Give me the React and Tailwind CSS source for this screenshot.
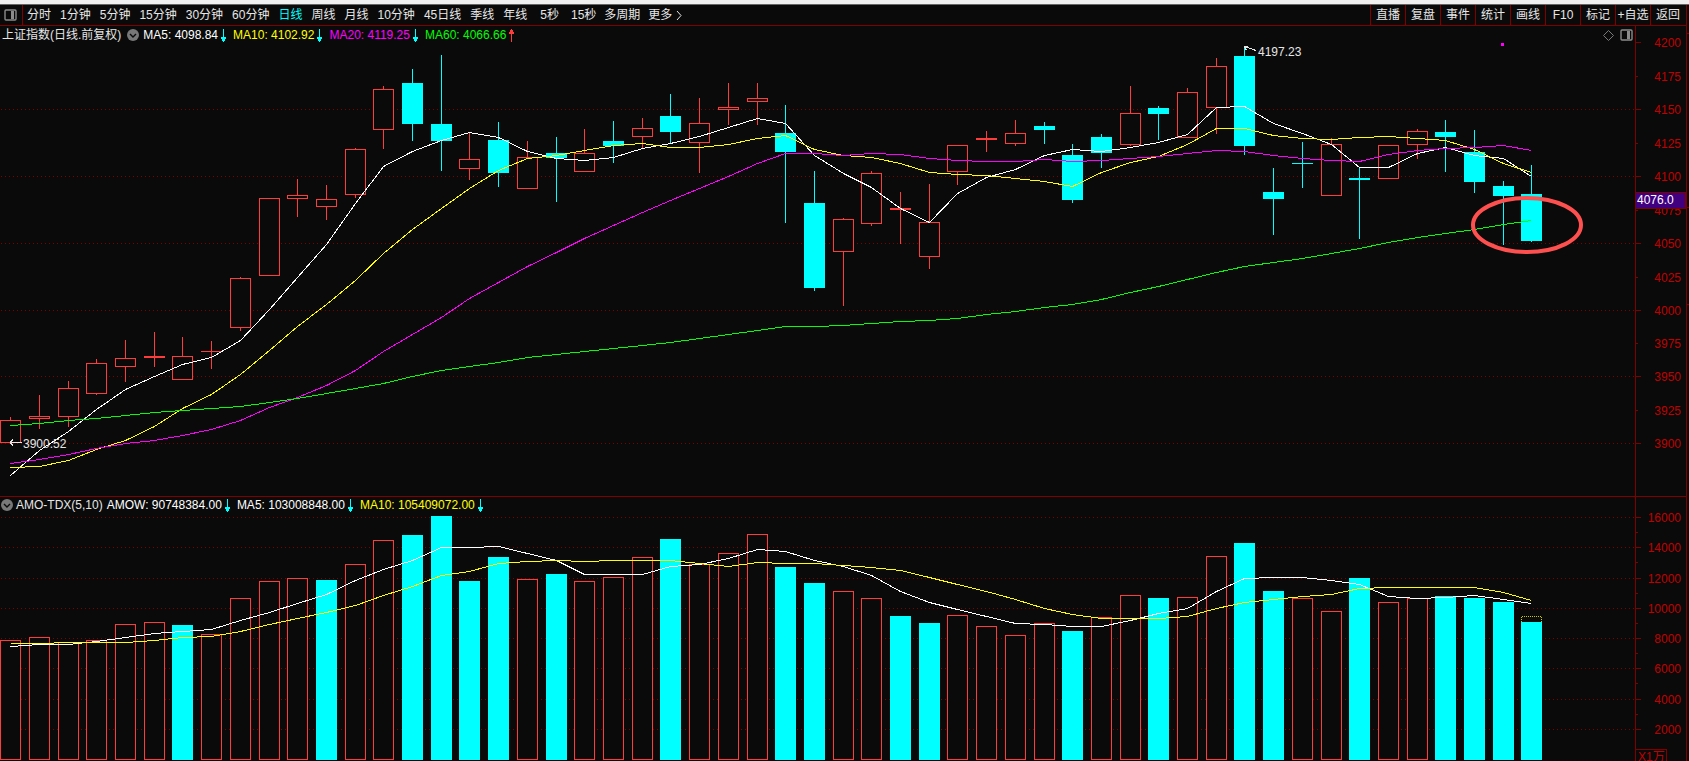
import { useState } from 'react'

const UP = '#ff3c3c'
const DOWN = '#00ffff'
const GRID = '#800000'
const BG = '#0a0a0a'

const PERIODS = ['分时', '1分钟', '5分钟', '15分钟', '30分钟', '60分钟', '日线', '周线', '月线', '10分钟', '45日线', '季线', '年线']
const SECONDS = ['5秒', '15秒']
const ACTIONS = ['直播', '复盘', '事件', '统计', '画线', 'F10', '标记', '+自选', '返回']

// x, high, body top, body bottom, low, rising
const candles = [
  [0, 417, 420, 442, 442, 1], [29, 395, 416, 418, 428, 1], [58, 381, 388, 416, 426, 1],
  [86, 359, 363, 393, 394, 1], [115, 340, 358, 366, 381, 1], [144, 332, 356, 357, 366, 1],
  [172, 337, 356, 379, 379, 1], [201, 341, 351, 351, 368, 1], [230, 277, 278, 327, 330, 1],
  [259, 198, 198, 275, 275, 1], [287, 179, 195, 198, 216, 1], [316, 185, 199, 206, 219, 1],
  [345, 148, 149, 194, 197, 1], [373, 86, 89, 129, 148, 1], [402, 69, 83, 123, 140, 0],
  [431, 55, 124, 140, 170, 0], [459, 133, 159, 168, 179, 1], [488, 122, 140, 172, 186, 0],
  [517, 141, 157, 188, 188, 1], [546, 137, 153, 157, 201, 0], [574, 129, 153, 171, 171, 1],
  [603, 121, 141, 145, 162, 0], [632, 118, 128, 136, 147, 1], [660, 94, 116, 131, 143, 0],
  [689, 98, 123, 142, 172, 1], [718, 83, 107, 109, 124, 1], [747, 83, 98, 101, 124, 1],
  [775, 105, 133, 151, 222, 0], [804, 171, 203, 287, 290, 0], [833, 218, 219, 251, 305, 1],
  [861, 171, 173, 223, 225, 1], [890, 192, 208, 209, 243, 1], [919, 184, 222, 256, 268, 1],
  [947, 145, 145, 171, 184, 1], [976, 131, 138, 139, 151, 1], [1005, 120, 133, 143, 145, 1],
  [1034, 122, 126, 129, 143, 0], [1062, 144, 155, 199, 202, 0], [1091, 134, 137, 152, 167, 0],
  [1120, 86, 113, 144, 145, 1], [1148, 106, 108, 113, 139, 0], [1177, 88, 92, 137, 137, 1],
  [1206, 58, 66, 107, 133, 1], [1234, 46, 56, 145, 154, 0], [1263, 168, 192, 198, 234, 0],
  [1292, 142, 163, 163, 187, 0], [1321, 138, 144, 195, 195, 1], [1349, 168, 178, 179, 238, 0],
  [1378, 145, 145, 178, 178, 1], [1407, 129, 131, 144, 158, 1], [1435, 120, 132, 136, 171, 0],
  [1464, 130, 152, 181, 192, 0], [1493, 181, 186, 195, 244, 0], [1521, 165, 194, 240, 241, 0],
]

// bar top, rising
const amounts = [
  [640, 1], [637, 1], [642, 1], [640, 1], [624, 1], [622, 1], [625, 0], [634, 1], [598, 1],
  [581, 1], [578, 1], [580, 0], [564, 1], [540, 1], [535, 0], [516, 0], [581, 0], [557, 0],
  [579, 1], [574, 0], [581, 1], [577, 1], [557, 1], [539, 0], [564, 1], [553, 1], [534, 1],
  [567, 0], [583, 0], [591, 1], [598, 1], [616, 0], [623, 0], [615, 1], [626, 1], [635, 1],
  [623, 1], [631, 0], [617, 1], [595, 1], [598, 0], [597, 1], [556, 1], [543, 0], [591, 0],
  [598, 1], [611, 1], [578, 0], [602, 1], [598, 1], [596, 0], [598, 0], [602, 0], [622, 0],
]

const priceLines = [
  {
    color: '#ffffff',
    ys: [475, 450, 431, 409, 389, 376, 364, 357, 340, 309, 277, 244, 203, 166, 151, 140, 132, 137, 151, 158, 160, 157, 148, 143, 136, 127, 118, 123, 155, 173, 187, 208, 222, 193, 177, 169, 155, 149, 151, 147, 142, 134, 107, 106, 123, 133, 144, 167, 167, 153, 147, 155, 158, 176],
  },
  {
    color: '#ffff00',
    ys: [467, 466, 460, 449, 440, 426, 408, 394, 374, 350, 326, 304, 280, 253, 229, 208, 188, 170, 158, 155, 150, 145, 143, 147, 147, 144, 138, 135, 149, 155, 157, 163, 172, 174, 175, 178, 181, 186, 172, 162, 156, 144, 128, 128, 135, 138, 139, 137, 136, 138, 140, 149, 163, 172],
  },
  {
    color: '#ff00ff',
    ys: [463, 459, 454, 448, 443, 440, 435, 429, 420, 407, 397, 385, 370, 351, 334, 317, 298, 282, 266, 252, 238, 225, 212, 200, 188, 176, 163, 153, 153, 155, 153, 154, 158, 160, 161, 161, 159, 161, 160, 158, 156, 153, 150, 151, 155, 158, 160, 161, 154, 150, 148, 147, 145, 150],
  },
  {
    color: '#00ff00',
    ys: [425, 423, 420, 418, 415, 412, 410, 408, 406, 402, 398, 393, 388, 383, 376, 370, 366, 362, 357, 354, 351, 348, 345, 342, 338, 334, 330, 326, 326, 325, 323, 321, 320, 318, 314, 311, 307, 304, 299, 292, 286, 279, 272, 266, 262, 258, 253, 248, 242, 237, 233, 229, 224, 220],
  },
]

const amountLines = [
  {
    color: '#ffffff',
    ys: [646, 644, 644, 641, 637, 633, 631, 629, 620, 612, 603, 594, 580, 569, 560, 547, 547, 546, 553, 560, 574, 574, 574, 566, 564, 558, 549, 551, 560, 566, 575, 591, 602, 609, 616, 623, 624, 626, 626, 620, 613, 608, 591, 578, 577, 577, 580, 584, 596, 598, 597, 595, 599, 603],
  },
  {
    color: '#ffff00',
    ys: [643, 643, 642, 642, 642, 640, 637, 636, 631, 624, 618, 612, 605, 595, 586, 575, 571, 563, 561, 560, 561, 560, 560, 560, 563, 566, 562, 563, 563, 565, 567, 570, 577, 584, 591, 599, 608, 614, 618, 618, 618, 616, 608, 602, 599, 596, 594, 588, 587, 587, 587, 587, 592, 600],
  },
]

const priceTicks = [
  [42, 4200], [76, 4175], [109, 4150], [143, 4125], [176, 4100], [210, 4075], [243, 4050],
  [277, 4025], [310, 4000], [343, 3975], [376, 3950], [410, 3925], [443, 3900],
]
const amountTicks = [
  [517, 16000], [547, 14000], [578, 12000], [608, 10000], [638, 8000], [668, 6000], [699, 4000], [729, 2000],
]

function PanelIcon() {
  return (
    <svg width="13" height="12" viewBox="0 0 13 12" className="block" aria-hidden="true">
      <rect x="1" y="1" width="11" height="10" rx="1" fill="none" stroke="#8c8c8c" strokeWidth="1.4" />
      <rect x="7" y="2" width="3" height="8" fill="#8c8c8c" />
    </svg>
  )
}

function ChevronDot() {
  return (
    <svg width="12" height="12" viewBox="0 0 12 12" className="block" aria-hidden="true">
      <circle cx="6" cy="6" r="6" fill="#787878" />
      <path d="M3 5 L6 8 L9 5" fill="none" stroke="#0a0a0a" strokeWidth="1.4" />
    </svg>
  )
}

function Arrow({ up }) {
  return (
    <svg width="6" height="13" viewBox="0 0 6 13" className="block shrink-0" shapeRendering="crispEdges" aria-hidden="true">
      {up
        ? <path d="M2 0h1v13h-1z M1 1h3v2h-3z M0 3h5v2h-5z" fill={UP} />
        : <path d="M2 0h1v13h-1z M1 10h3v2h-3z M0 8h5v2h-5z" fill={DOWN} />}
    </svg>
  )
}

function Legend({ className, text, up }) {
  return (
    <span className={`flex items-center gap-[3px] ${className}`}>
      {text}
      <Arrow up={up} />
    </span>
  )
}

function GridLine({ y }) {
  return <line x1="1" x2="1635" y1={y + 0.5} y2={y + 0.5} stroke={GRID} strokeDasharray="1 3" />
}

function Line({ color, ys }) {
  const points = ys.map((y, i) => `${candles[i][0] + 10.5},${y + 0.5}`).join(' ')
  return <polyline points={points} fill="none" stroke={color} />
}

function Tick({ y, major }) {
  return <rect x="1636" y={y} width={major ? 5 : 2} height="1" fill={GRID} />
}

function Candle({ row }) {
  const [x, high, top, bottom, low, rising] = row
  const color = rising ? UP : DOWN
  const hollow = rising && bottom - top > 1
  return (
    <g>
      <rect x={x + 10} y={high} width="1" height={low - high + 1} fill={color} />
      {hollow
        ? <rect x={x + 0.5} y={top + 0.5} width="20" height={bottom - top} fill={BG} stroke={color} />
        : <rect x={x} y={top} width="21" height={bottom - top + 1} fill={color} />}
    </g>
  )
}

function AmountBar({ x, top, rising }) {
  if (rising) return <rect x={x + 0.5} y={top + 0.5} width="20" height={759 - top} fill={BG} stroke={UP} />
  return <rect x={x} y={top} width="21" height={760 - top} fill={DOWN} />
}

function PriceChart() {
  return (
    <svg viewBox="0 44 1686 452" className="relative block w-full h-auto overflow-visible text-[12px]" role="img" aria-label="上证指数 日线">
      <g shapeRendering="crispEdges">
        {priceTicks.map(([y, v]) => v % 50 === 0 && v < 4200 && <GridLine key={v} y={y} />)}
        {candles.map(row => <Candle key={row[0]} row={row} />)}
        {priceLines.map(l => <Line key={l.color} {...l} />)}
        <rect x="1635" y="44" width="1" height="452" fill={GRID} />
        {priceTicks.map(([y, v]) => <Tick key={v} y={y} major={v % 50 === 0} />)}
        <rect x="1501" y="43" width="3" height="3" fill="#ff00ff" />
        <path d="M10 442.5H22 M10 442.5L13 439.5 M10 442.5L13 445.5" stroke="#e6e6e6" fill="none" />
        <path d="M1244.5 46.5L1256 50.5 M1244.5 46.5H1248 M1244.5 46.5L1246.5 50.5" stroke="#e6e6e6" fill="none" />
      </g>
      <g fill="#c00000" textAnchor="end">
        {priceTicks.map(([y, v]) => <text key={v} x="1681" y={y + 5}>{v}</text>)}
      </g>
      <text x="23" y="448" fill="#e6e6e6">3900.52</text>
      <text x="1258" y="56" fill="#e6e6e6">4197.23</text>
      <rect x="1635.5" y="192.5" width="50" height="16" fill="#400080" stroke={GRID} shapeRendering="crispEdges" />
      <text x="1637" y="204" fill="#ffffff">4076.0</text>
      <ellipse cx="1527" cy="225" rx="54" ry="27" fill="none" stroke="#ff5050" strokeWidth="4" />
    </svg>
  )
}

function AmountChart() {
  return (
    <svg viewBox="0 513 1686 248" className="relative block w-full h-auto overflow-visible text-[12px]" role="img" aria-label="AMO-TDX">
      <g shapeRendering="crispEdges">
        {amountTicks.map(([y, v]) => <GridLine key={v} y={y} />)}
        {amounts.map(([top, rising], i) => <AmountBar key={i} x={candles[i][0]} top={top} rising={rising} />)}
        <path d="M1521.5 622V616.5H1541.5V622" fill="none" stroke="#c8c800" strokeDasharray="1 1" />
        {amountLines.map(l => <Line key={l.color} {...l} />)}
        <rect x="1635" y="513" width="1" height="248" fill={GRID} />
        {amountTicks.map(([y, v]) => <Tick key={v} y={y} major />)}
        {amountTicks.slice(0, -1).map(([y, v]) => <Tick key={v} y={y + 15} />)}
        <path d="M1636 749.5H1666.5V761" fill="none" stroke={GRID} />
      </g>
      <g fill="#c00000">
        {amountTicks.map(([y, v]) => <text key={v} x="1681" y={y + 5} textAnchor="end">{v}</text>)}
        <text x="1638" y="761">X1万</text>
      </g>
    </svg>
  )
}

export default function App() {
  const [period, setPeriod] = useState('日线')
  const periodButton = p => (
    <button key={p} onClick={() => setPeriod(p)} className={period === p ? 'text-[#00ffff]' : 'text-[#e6e6e6]'}>{p}</button>
  )

  return (
    <div className="min-h-screen bg-[#0a0a0a] font-['Liberation_Sans','Noto_Sans_CJK_SC',sans-serif] text-[12px] leading-4 text-[#e6e6e6] whitespace-nowrap overflow-hidden">
      <div className="h-[5px] bg-[#f0f0f0] border-b border-[#666666]" />
      <div className="flex">
        <main className="flex-1 min-w-0 border-r border-[#800000]">
          <header className="flex justify-between h-[21px] border-b border-[#800000]">
            <nav className="flex items-center">
              <button aria-label="侧栏" className="flex items-center h-full w-[23px] pl-1 border-r border-[#800000]"><PanelIcon /></button>
              <div className="flex gap-[9px] pl-1">
                {PERIODS.map(periodButton)}
                <div className="flex gap-3 px-1">{SECONDS.map(periodButton)}</div>
              </div>
              <div className="flex items-center gap-2 pl-1">
                {periodButton('多周期')}
                <button className="flex items-center gap-1">
                  更多
                  <svg width="6" height="11" viewBox="0 0 6 11" aria-hidden="true"><path d="M1 1L5 5.5L1 10" fill="none" stroke="#e6e6e6" /></svg>
                </button>
              </div>
            </nav>
            <div className="flex pr-px">
              {ACTIONS.map(a => (
                <button key={a} className="w-[35px] border-l border-[#800000] text-center">{a}</button>
              ))}
            </div>
          </header>

          <section>
            <div className="flex h-[18px]">
              <div className="flex flex-1 items-center gap-[6px] pl-[2px]">
                <span className="flex items-center gap-[6px]">上证指数(日线.前复权)<ChevronDot /></span>
                <Legend className="-ml-[2px] text-white" text="MA5: 4098.84" />
                <Legend className="text-[#ffff00]" text="MA10: 4102.92" />
                <Legend className="text-[#ff00ff]" text="MA20: 4119.25" />
                <Legend className="text-[#00ff00]" text="MA60: 4066.66" up />
              </div>
              <div className="flex items-center gap-[6px] pr-[2px]">
                <svg width="11" height="11" viewBox="0 0 11 11" aria-hidden="true"><path d="M5.5 .5L10.5 5.5L5.5 10.5L.5 5.5Z" fill="none" stroke="#787878" /></svg>
                <PanelIcon />
              </div>
              <div className="w-[51px] border-l border-[#800000]" />
            </div>
            <PriceChart />
          </section>

          <section className="border-t border-[#800000]">
            <div className="flex h-4">
              <div className="flex flex-1 items-center gap-[6px] pl-px">
                <span className="flex items-center gap-[3px]"><ChevronDot />AMO-TDX(5,10)</span>
                <Legend className="-ml-[2px] text-white" text="AMOW: 90748384.00" />
                <Legend className="text-white" text="MA5: 103008848.00" />
                <Legend className="text-[#ffff00]" text="MA10: 105409072.00" />
              </div>
              <div className="w-[51px] border-l border-[#800000]" />
            </div>
            <AmountChart />
          </section>
        </main>
        <div className="flex flex-col w-[2px] pt-7">
          <div className="h-[174px] border-t border-[#800000]" />
          <div className="h-[97px] border-t border-[#800000]" />
          <div className="border-t border-[#800000]" />
        </div>
      </div>
    </div>
  )
}
